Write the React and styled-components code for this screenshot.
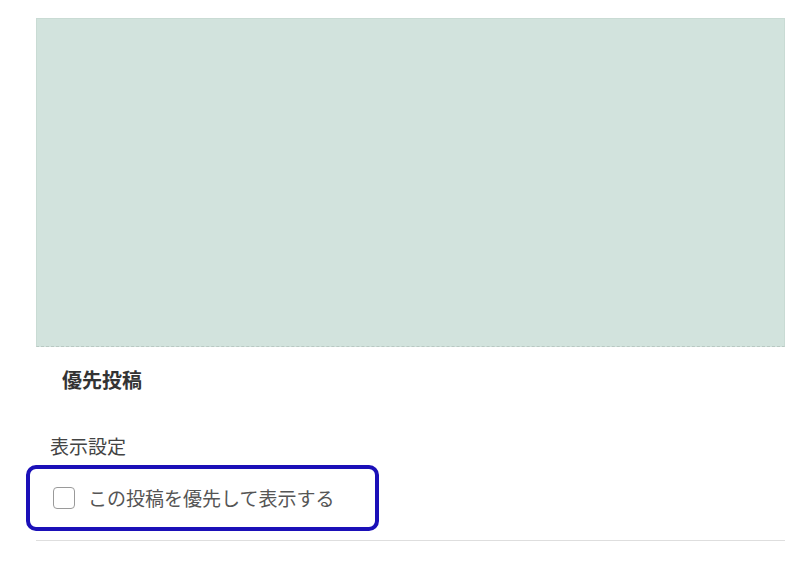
import React from "react";
import styled, { createGlobalStyle } from "styled-components";

const GlobalStyle = createGlobalStyle`
  html, body {
    margin: 0;
    padding: 0;
    background: #fff;
  }
  body {
    font-family: "Noto Sans CJK JP", "Noto Sans", sans-serif;
  }
`;

const Page = styled.div`
  width: 749px;
  padding: 18px 0 0 36px;
`;

const Preview = styled.div`
  height: 329px;
  background-color: #d2e3dd;
  border: 1px solid #c9dbd4;
  border-bottom: 1px dashed #b9c9c3;
  box-sizing: border-box;
`;

const Heading = styled.h2`
  margin: 0;
  padding: 20px 0 0 26px;
  height: 46px;
  font-size: 20px;
  line-height: 26px;
  font-weight: 700;
  color: #333;
`;

const Section = styled.div`
  padding-top: 20px;
`;

const Label = styled.div`
  padding-left: 14px;
  font-size: 19px;
  line-height: 26px;
  color: #444;
`;

const FocusBox = styled.label`
  display: flex;
  align-items: center;
  gap: 13px;
  box-sizing: border-box;
  width: 353px;
  height: 66px;
  margin: 6px 0 0 -10px;
  padding-left: 23px;
  border: 4px solid #1b10b8;
  border-radius: 10px;
  cursor: pointer;
`;

const Box = styled.span`
  width: 20px;
  height: 20px;
  border: 1.5px solid #9a9a9a;
  border-radius: 4px;
  background: #fff;
  flex-shrink: 0;
`;

const BoxText = styled.span`
  font-size: 19px;
  color: #555;
  line-height: 26px;
`;

const Divider = styled.div`
  margin-top: 9px;
  height: 1px;
  background: #dedede;
`;

export default function App() {
  return (
    <>
      <GlobalStyle />
      <Page>
        <Preview />
        <Heading>優先投稿</Heading>
        <Section>
          <Label>表示設定</Label>
          <FocusBox>
            <Box />
            <BoxText>この投稿を優先して表示する</BoxText>
          </FocusBox>
        </Section>
        <Divider />
      </Page>
    </>
  );
}
